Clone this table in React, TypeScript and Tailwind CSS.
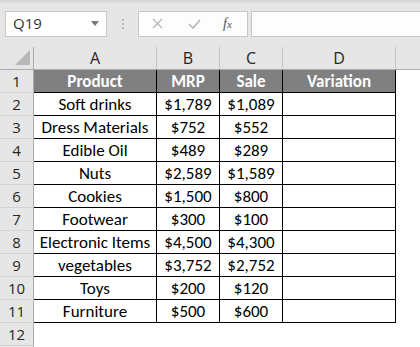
import React from 'react';

const rows = [
    ['Soft drinks', '$1,789', '$1,089'],
    ['Dress Materials', '$752', '$552'],
    ['Edible Oil', '$489', '$289'],
    ['Nuts', '$2,589', '$1,589'],
    ['Cookies', '$1,500', '$800'],
    ['Footwear', '$300', '$100'],
    ['Electronic Items', '$4,500', '$4,300'],
    ['vegetables', '$3,752', '$2,752'],
    ['Toys', '$200', '$120'],
    ['Furniture', '$500', '$600'],
];

const cellFont = { fontFamily: 'Carlito, Lato, "Liberation Sans", sans-serif' };
const uiFont = { fontFamily: '"Segoe UI", "Open Sans", "Noto Sans", sans-serif' };

function RowHead({ n }: { n: number }) {
    return (
        <div
            className="w-[34px] h-[23px] shrink-0 flex items-center justify-center bg-[#e6e6e6] border-r border-b border-r-[#ababab] border-b-[#d4d4d4] text-[15px] text-[#262626]"
            style={uiFont}
        >
            {n}
        </div>
    );
}

export default function App() {
    return (
        <div className="w-[420px] h-[347px] overflow-hidden bg-[#e6e6e6] relative">
            {/* top shadow */}
            <div className="absolute top-0 left-0 right-0 h-[4px] bg-gradient-to-b from-[#d2d2d2] to-[#e6e6e6]"></div>

            {/* formula bar */}
            <div className="h-[47px] flex items-center">
                <div className="ml-[5px] w-[102px] h-[26px] bg-white border border-[#c6c6c6] flex items-center justify-between pl-[7px] pr-[7px]">
                    <span className="text-[15px] text-[#333]" style={uiFont}>Q19</span>
                    <svg width="8" height="5" viewBox="0 0 8 5"><path d="M0 0 L8 0 L4 5 Z" fill="#777" /></svg>
                </div>
                <div className="w-[31px] pl-[1px] flex flex-col items-center gap-[2px]">
                    <span className="w-[2px] h-[2px] bg-[#b9b9b9]"></span>
                    <span className="w-[2px] h-[2px] bg-[#b9b9b9]"></span>
                    <span className="w-[2px] h-[2px] bg-[#b9b9b9]"></span>
                </div>
                <div className="w-[110px] h-[26px] bg-[#fdfdfd] border border-[#c6c6c6] flex items-center">
                    <svg className="ml-[13px]" width="11" height="11" viewBox="0 0 11 11">
                        <path d="M1 1 L10 10 M10 1 L1 10" stroke="#b5b5b5" strokeWidth="1.3" />
                    </svg>
                    <svg className="ml-[25px]" width="13" height="10" viewBox="0 0 13 10">
                        <path d="M1 5 L5 9 L12 1" stroke="#b5b5b5" strokeWidth="1.6" fill="none" />
                    </svg>
                    <span className="ml-[22px] text-[14px] italic text-[#555]" style={{ fontFamily: '"Liberation Serif", serif' }}>
                        f<span className="text-[11px]">x</span>
                    </span>
                </div>
                <div className="ml-[3px] flex-1 h-[26px] bg-[#fdfdfd] border border-[#c6c6c6] border-r-0"></div>
            </div>

            {/* column headers */}
            <div className="flex h-[23px] border-b border-[#ababab]" style={uiFont}>
                <div className="w-[34px] shrink-0 border-r border-[#ababab] relative">
                    <svg className="absolute left-[14px] top-[2px]" width="17" height="17" viewBox="0 0 17 17">
                        <path d="M16 1 L16 16 L1 16 Z" fill="#b8b8b8" />
                    </svg>
                </div>
                <div className="w-[123px] shrink-0 border-r border-[#c6c6c6] flex items-center justify-center text-[16px] text-[#262626]">A</div>
                <div className="w-[63px] shrink-0 border-r border-[#c6c6c6] flex items-center justify-center text-[16px] text-[#262626]">B</div>
                <div className="w-[63px] shrink-0 border-r border-[#c6c6c6] flex items-center justify-center text-[16px] text-[#262626]">C</div>
                <div className="w-[113px] shrink-0 border-r border-[#c6c6c6] flex items-center justify-center text-[16px] text-[#262626]">D</div>
                <div className="flex-1"></div>
            </div>

            {/* row 1 header */}
            <div className="flex" style={cellFont}>
                <RowHead n={1} />
                <div className="w-[123px] h-[23px] shrink-0 pt-[2px] bg-[#808080] border-r border-b border-black flex items-center justify-center text-[17px] font-bold text-white">Product</div>
                <div className="w-[63px] h-[23px] shrink-0 pt-[2px] bg-[#808080] border-r border-b border-black flex items-center justify-center text-[17px] font-bold text-white">MRP</div>
                <div className="w-[63px] h-[23px] shrink-0 pt-[2px] bg-[#808080] border-r border-b border-black flex items-center justify-center text-[17px] font-bold text-white">Sale</div>
                <div className="w-[113px] h-[23px] shrink-0 pt-[2px] bg-[#808080] border-r border-b border-black flex items-center justify-center text-[17px] font-bold text-white">Variation</div>
                <div className="flex-1 bg-white"></div>
            </div>

            {rows.map((r, i) => (
                <div key={i} className="flex" style={cellFont}>
                    <RowHead n={i + 2} />
                    <div className="w-[123px] h-[23px] shrink-0 pt-[2px] bg-white border-r border-b border-black flex items-center justify-center text-[17px] text-black whitespace-nowrap">{r[0]}</div>
                    <div className="w-[63px] h-[23px] shrink-0 pt-[2px] bg-white border-r border-b border-black flex items-center justify-center text-[17px] text-black">{r[1]}</div>
                    <div className="w-[63px] h-[23px] shrink-0 pt-[2px] bg-white border-r border-b border-black flex items-center justify-center text-[17px] text-black">{r[2]}</div>
                    <div className="w-[113px] h-[23px] shrink-0 bg-white border-r border-b border-black"></div>
                    <div className="flex-1 bg-white"></div>
                </div>
            ))}

            <div className="flex">
                <RowHead n={12} />
                <div className="flex-1 h-[23px] bg-white"></div>
            </div>
            <div className="flex h-[10px]">
                <div className="w-[34px] shrink-0 bg-[#e6e6e6] border-r border-[#ababab]"></div>
                <div className="flex-1 bg-white"></div>
            </div>
        </div>
    );
}
